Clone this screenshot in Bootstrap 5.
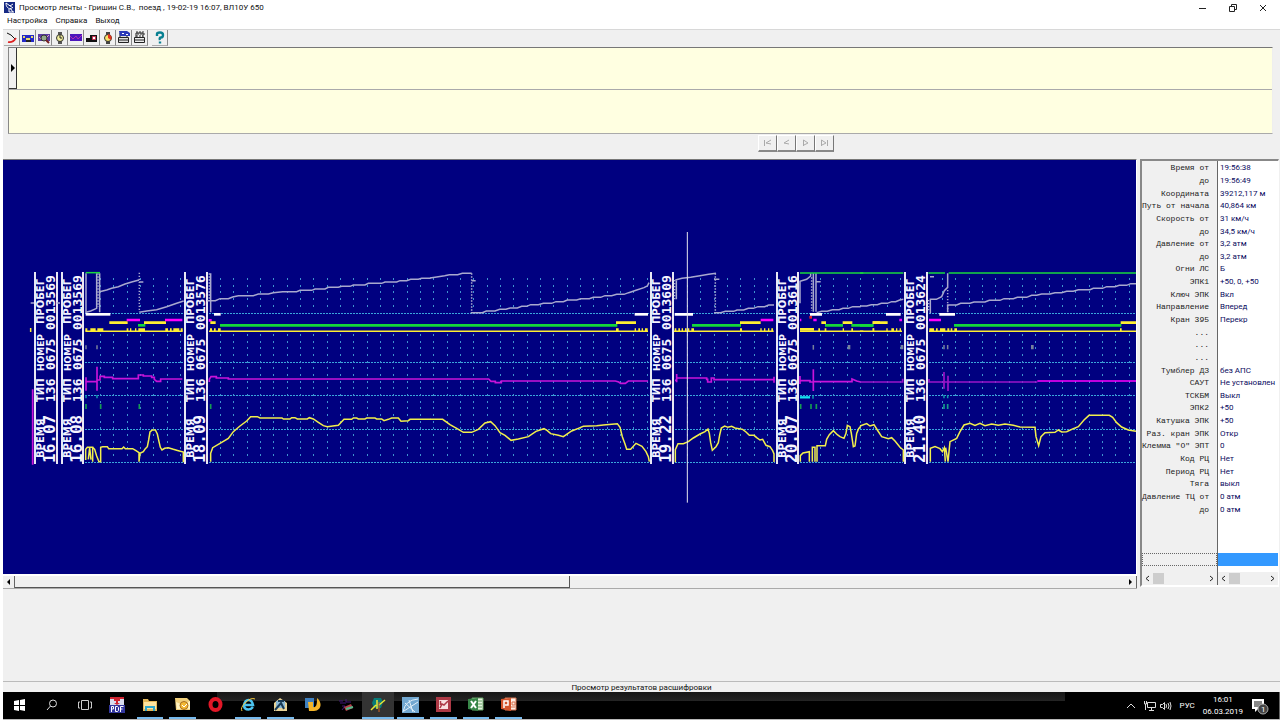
<!DOCTYPE html>
<html lang="ru">
<head>
<meta charset="utf-8">
<meta name="viewport" content="width=device-width, initial-scale=1">
<title>Просмотр ленты</title>
<link href="https://cdn.jsdelivr.net/npm/bootstrap@5.3.0/dist/css/bootstrap.min.css" rel="stylesheet">
<script src="https://cdn.jsdelivr.net/npm/bootstrap@5.3.0/dist/js/bootstrap.bundle.min.js" defer></script>
<style>
body{font:8px/12px Roboto,"Noto Sans",sans-serif;color:#111;background:#fff;padding-left:3px;overflow-x:hidden}
button{font:inherit;color:inherit;padding:0;border:0;background:none}
svg{display:block}
.titlebar{height:15px;white-space:pre;padding:0 2px 0 1px}
.titlebar .win{width:30px;height:14px;display:flex;align-items:center;justify-content:center}
.menubar{height:14px}
.menubar a{color:#111;text-decoration:none}
.face{background:#f0f0f0}
.tools{height:18px;border-top:1px solid #d8d8d8;padding-left:1px}
.tool{width:16px;height:16px;border-right:1px solid #8a8a8a;border-bottom:1px solid #aaa;display:flex;align-items:center;justify-content:center}
.records{margin:0 7px 0 5px;height:87px;background:#ffffe1;border:1px solid #888;border-color:#777 #eee #aaa #888}
.records .rec{height:42px;border-bottom:1px solid #aaa}
.records .mark-cell{width:8px;background:#f0f0f0;border-right:1px solid #333;border-bottom:1px solid #333;display:flex;align-items:center;justify-content:center}
.navrow{height:25px;padding-top:1px}
.navbtns{margin-left:755px}
.navbtns button{width:19px;height:17px;border:1px solid #fff;border-right-color:#777;border-bottom:2px solid #888;display:flex;align-items:center;justify-content:center}
.tape{background:#000080;height:415px;border-top:1px solid #777;border-right:1px solid #fff;overflow:hidden}
.tape svg{width:1133px;height:415px}
.tape text{fill:#f4f4ff}
.cap{font:bold 10px "DejaVu Sans",sans-serif}
.capn{font:bold 9px "DejaVu Sans",sans-serif}
.num{font:bold 13px "DejaVu Sans Mono",monospace}
.clock{font:bold 16px "DejaVu Sans Mono",monospace}
.hscroll{height:15px;background:#f0f0f0;border-top:2px solid #fff;border-bottom:1px solid #aaa}
.hscroll button{width:12px;border-right:1px solid #666;display:flex;align-items:center;justify-content:center;background:#f0f0f0}
.hscroll .thumb{width:50%;background:#f0f0f0;border-right:1px solid #555;border-bottom:1px solid #555}
.side{width:139px;height:428px;margin:0 1px 0 3px;border:2px solid #888;border-color:#888 #fff #fff #888;border-right-width:1px;padding-top:1px;background:linear-gradient(90deg,#f0f0f0 75px,#666 75px,#666 76px,#fff 76px)}
.side table{height:354px;width:100%;table-layout:fixed}
.side th,.side td{padding:0;height:12px;line-height:12px;white-space:nowrap;vertical-align:middle}
.side th{width:76px;text-align:right;padding-right:9px;font:8px/12px "Liberation Mono",monospace;color:#222}
.side td{font:8px/12px Roboto,sans-serif;color:#0a0a60;padding-left:2px}
.side .pick{height:13px}
.side .pick div:first-child{width:75px;border:1px dotted #666}
.side .pick div:last-child{background:#3399ff;margin-left:1px}
.sidebars{margin-top:6px}
.sb{height:13px;background:#f0f0f0;display:flex;align-items:center}
.sb:first-child{width:75px;margin-right:1px}
.sb button{width:11px;height:13px;display:flex;align-items:center;justify-content:center}
.sb i{width:11px;height:11px;background:#cdcdcd}
.status{height:11px;line-height:11px;border-top:1px solid #bbb;background:#f1f1f1;text-align:center}
.taskbar{height:27px;background:#000;color:#fff;border-right:1px solid #666}
.stale{position:absolute;left:214px;width:848px;height:9px;top:0;background:linear-gradient(#171717,#242424)}
.apps{width:522px;z-index:1}
.apps button{flex:1 1 0;display:flex;align-items:center;justify-content:center;border-bottom:2px solid transparent;margin:0 3px}
.apps .open{border-bottom-color:#76b9ed}
.apps .now{background:#333;margin:0;flex:0 0 32px}
.tray{padding-right:10px}
.edge{height:1px;background:#b9b9b9}
</style>
</head>
<body class="d-flex flex-column min-vh-100">
<header>
  <div class="titlebar d-flex align-items-center"><svg class="me-1 flex-shrink-0" width="11" height="11" viewBox="0 0 11 11"><path fill="#172a84" d="M0 0h11v11H0z"/><path d="M2 1l7 5M2 1c0 4 2 6 6 6M6 4l3-2M6 6l3 4M5 7v3h5" stroke="#fff" fill="none"/></svg><span class="flex-fill">Просмотр ленты - Гришин С.В.,  поезд , 19-02-19 16:07, ВЛ10У 650</span><button class="win" aria-label="Свернуть"><svg width="8" height="8"><path d="M0 4.5h7" stroke="#222"/></svg></button><button class="win" aria-label="Восстановить"><svg width="8" height="8" fill="none" stroke="#222"><path d="M.5 2.500h5v5h-5zM2.500 2V.5h5v5H6"/></svg></button><button class="win" aria-label="Закрыть"><svg width="8" height="8"><path d="M1 1l6 6M7 1L1 7" stroke="#222"/></svg></button></div>
  <nav class="menubar d-flex gap-2 ps-1"><a href="#">Настройка</a><a href="#">Справка</a><a href="#">Выход</a></nav>
</header>
<main class="face flex-fill d-flex flex-column">
  <div class="tools d-flex" role="toolbar">
    <button class="tool" aria-label="Кривая"><svg width="12" height="12"><path d="M1 1l4 2 4 4" stroke="#111" fill="none"/><path d="M2 10q5 1 8-4" stroke="#d22" stroke-width="1.600" fill="none"/></svg></button>
    <button class="tool" aria-label="Лента"><svg width="12" height="12"><path fill="#2428c8" d="M0 3h12v7H0z"/><path fill="#e4d86a" d="M1 4h2v2H1zM9 4h2v2H9zM4 6h4v2H4z"/><path fill="#222" d="M4 8h5v2H4z"/></svg></button>
    <button class="tool" aria-label="Обзор"><svg width="12" height="12"><path fill="#5b39a5" d="M0 2h12v7H0z"/><path d="M1 5l2 2M9 5l2-2" stroke="#e0a0c0"/><circle cx="6" cy="6" r="3" fill="#94a98c" stroke="#333"/><path d="M8 8l3 3" stroke="#722" stroke-width="2"/></svg></button>
    <button class="tool" aria-label="Время"><svg width="12" height="12"><path fill="#555" d="M4 0h4v12H4z"/><circle cx="6" cy="6" r="3.500" fill="#f2ee9a" stroke="#333"/><path d="M6 3v3h2" stroke="#222" fill="none"/></svg></button>
    <button class="tool" aria-label="График"><svg width="12" height="12"><path fill="#4b16bc" d="M0 2h12v7H0z"/><path d="M0 4l3 3 3-3 2 3 4-4" stroke="#b030b0" fill="none"/></svg></button>
    <button class="tool" aria-label="Локомотив"><svg width="12" height="12"><path fill="#111" d="M0 6h4V3h7v7H0z"/><path fill="#fff" stroke="#c35" d="M6.500 4.500h3v3h-3z"/></svg></button>
    <button class="tool" aria-label="Таймер"><svg width="12" height="12"><path fill="#444" d="M4 0h4v12H4z"/><circle cx="6" cy="6" r="3.500" fill="#f8e36a" stroke="#333"/><path fill="#e3321c" d="M6 6V2a4 4 0 0 1 3 6z"/></svg></button>
    <button class="tool" aria-label="Печать ленты"><svg width="14" height="13"><path d="M1.500 6.500h10v5h-10zM3 6V2h7v4M1 9h11" fill="#ddd" stroke="#222"/><path fill="#2938b8" d="M2 0h8l3 2v3H3z"/><path fill="#fff" d="M5 2h2v1H5zM9 3h2v1H9z"/></svg></button>
    <button class="tool" aria-label="Печать"><svg width="14" height="13"><path d="M1.500 6.500h10v5h-10zM3 6V2h7v4M1 9h11" fill="#eee" stroke="#222"/><path d="M3 1h8M4 3h8M3 5h7" stroke="#333" stroke-dasharray="2 1"/></svg></button>
    <button class="tool ms-1" aria-label="Справка"><svg width="12" height="13"><path d="M3 5V3q0-1.500 3-1.500T9 4 7 6.500 6 9M6 10.500v2" stroke="#088092" stroke-width="2.400" fill="none"/></svg></button>
  </div>
  <section class="records"><div class="rec d-flex"><div class="mark-cell"><svg width="5" height="8"><path d="M1 0l4 4-4 4z"/></svg></div></div></section>
  <div class="navrow"><div class="navbtns d-flex">
    <button aria-label="В начало"><svg width="9" height="8" fill="none" stroke="#aaa"><path d="M1.500 1v6M8 1L3 4l5 1"/></svg></button>
    <button aria-label="Назад"><svg width="9" height="8" fill="none" stroke="#aaa"><path d="M7 1L2 4l5 1"/></svg></button>
    <button aria-label="Вперед"><svg width="9" height="8" fill="none" stroke="#aaa"><path d="M2.500 7V1L7 4 3 6"/></svg></button>
    <button aria-label="В конец"><svg width="9" height="8" fill="none" stroke="#aaa"><path d="M1.500 7V1L6 4 2 6M7.500 1v6"/></svg></button>
  </div></div>
  <div class="d-flex">
    <section class="flex-fill overflow-hidden">
      <div class="tape">
        <svg viewBox="3 160 1133 415" fill="none">
          <g id="grid" shape-rendering="crispEdges"></g>
          <g id="heads"></g>
          <g transform="translate(0 260) scale(.33333)" stroke-width="4.500">
            <path stroke="#a9a9ce" d="M92 129h10M170 129h10M258 40v117l14-4 18-8V40M299 40v117M299 95l21-5 15-5 20-5 20-8 20-6 22-6M418 66h12M418 157l22-4 30-4 30-9 30-10 21-7"/>
            <path stroke="#a9a9ce" stroke-dasharray="4 5" d="M418 38v118M294 40v100"/>
            <path stroke="#19d83c" d="M257 38h43"/><path stroke="#fff" stroke-width="8" d="M257 163h74"/>
            <path stroke="#ffee32" stroke-width="8" d="M328 188h55M432 188h66M256 209h6M271 209h16M292 209h18M380 209h5M390 209h4M405 209h4M415 209h20M496 209h8M510 209h5M520 209h18M542 209h6"/>
            <path stroke="#ffee32" d="M92 204v12M256 214h292"/><path stroke="#f0f" stroke-width="8" d="M380 180h40M495 180h52"/>
            <path stroke="#14d83a" stroke-width="8" d="M414 196h22"/>
            <path stroke="#77819c" d="M258 256v12M291 256v12"/>
            <path stroke="#1299ae" d="M258 405v10M291 405v10"/><path stroke="#159b53" stroke-width="5" d="M258 432v15M302 432v15M418 432v15"/>
            <path stroke="#c914d9" stroke-width="5" d="M98 388v226M258 352v40M258 365h33M291 320v72M291 360h9v-11h13v3h25v4h77v-11h15v3h25v4h8v6l7 6h12v-7h65"/>
            <path stroke="#f2ef4c" d="M257 600V568L262 562H278V605M265 598L269 563 273 599M278 562L284 568 290 588 297 605H302V562L308 560H322L326 566H366L371 561 376 566H398L408 572 417 578V605L420 580 430 575 436 566 442 560 446 540 450 516 457 510H466L472 522 477 545 481 562 486 570 494 565 505 563 520 568 535 572 550 576V607"/>
          </g>
          <g transform="translate(200 260) scale(.33333)" stroke-width="4.500">
            <path stroke="#a9a9ce" d="M22 122H46L60 116H85L98 111 115 107H160L175 102H205L220 98 248 95H290L300 91H335L345 87H375L385 82H415L425 79H450L460 75H495L505 70H545L555 66H590L600 62H620L632 58H655L665 55H692M32 40v117"/>
            <path stroke="#a9a9ce" stroke-dasharray="4 5" d="M28 40v80"/>
            <path stroke="#fff" stroke-width="8" d="M42 163h20"/><path stroke="#f0f" stroke-width="8" d="M26 181h9"/>
            <path stroke="#ffee32" stroke-width="8" d="M31 188h16M30 209h6M42 209h5M54 209h8"/><path stroke="#ffee32" d="M27 214h663"/>
            <path stroke="#14d83a" stroke-width="8" d="M60 196h630"/>
            <path stroke="#c914d9" stroke-width="5" d="M28 366v-8l5-8h16v4h36v3h605"/><path stroke="#159b53" stroke-width="5" d="M32 432v15"/>
            <path stroke="#f2ef4c" d="M32 605V580L38 563 60 550 85 535 100 515 120 498 140 483 152 470H172L180 474H246L250 477H270L275 473H285L292 477H322L328 473 340 477 355 487 370 497 382 500 415 496 432 478H455L460 474H470L475 477H495L500 474H525L530 477H545L552 482 565 478 575 474H595L603 484 625 482 630 478H691"/>
          </g>
          <g transform="translate(430 260) scale(.33333)" stroke-width="4.500">
            <path stroke="#a9a9ce" d="M0 54L20 51 44 47 58 44H83L97 40H125M125 62h12M122 158H157L169 153H195L209 148H228L240 144H262L275 139H290L302 134H325L340 130H365L378 125H400L412 120H440L452 116H478L490 112H512L525 107H545L560 103H582L596 98 618 91 642 83 652 78 657 68"/>
            <path stroke="#a9a9ce" stroke-dasharray="4 5" d="M125 40v116"/>
            <path stroke="#fff" stroke-width="8" d="M614 163h40"/>
            <path stroke="#14d83a" stroke-width="8" d="M0 196h562"/><path stroke="#ffee32" stroke-width="8" d="M558 188h60M558 209h8M614 209h4M625 209h5M635 209h4M645 209h8"/><path stroke="#ffee32" d="M0 214h654"/>
            <path stroke="#c914d9" stroke-width="5" d="M0 357H176L183 364H196V368H214V363H556L566 366 572 370H586L595 363H654"/>
            <path stroke="#f2ef4c" d="M0 478H38L60 494 80 505 100 517H125L145 508 165 489 182 485 195 497 210 518 225 526 243 541 265 537 295 530 318 514 342 506 352 512 362 521 385 526 400 530 412 522 425 513 445 505 460 499 500 497 520 495 562 491 570 502 577 530 585 552 590 568H602L618 550 636 559 648 575 655 590 658 605"/>
          </g>
          <g transform="translate(640 260) scale(.33333)" stroke-width="4.500">
            <path stroke="#a9a9ce" d="M106 60L126 55 152 52 180 47 206 43 228 40M222 58h16M109 60v58M222 158H242L256 154H281L291 150H311L325 145H340L354 140H374L386 135H402M480 130V64l20-6 12-10v-8M520 40v115M528 40v115M530 65h12M530 158L545 154H562L577 149H597L609 145H625L638 140H662"/>
            <path stroke="#a9a9ce" stroke-dasharray="4 5" d="M226 40v116M104 60v60M515 52v100"/>
            <path stroke="#19d83c" d="M480 39h190"/><path stroke="#fff" stroke-width="8" d="M104 163h55M510 163h36"/>
            <path stroke="#14d83a" stroke-width="8" d="M156 196h147M555 196h54M634 196h67"/>
            <path stroke="#ffee32" stroke-width="8" d="M300 188h62M544 188h14M608 188h29M698 188h22M104 209h5M115 209h5M125 209h4M135 209h5M144 209h4M154 209h8M300 209h6M361 209h4M372 209h4M384 209h4M394 209h5M480 208h42M535 209h5M554 209h5M608 209h4M634 209h5M698 209h5"/>
            <path stroke="#ffee32" d="M102 214h299M480 214h190"/>
            <path stroke="#f0f" stroke-width="8" d="M362 180h38M480 180h4M520 180h10"/><path stroke="#e52232" stroke-width="8" d="M508 172h8"/>
            <path stroke="#c914d9" stroke-width="5" d="M105 361h5M110 342v25M110 354H200V358H203V366H214V354H222V359H402M402 350v18M480 348v24M480 362H510V366H520M520 328v65M520 365H636V357L650 363 662 366"/>
            <path stroke="#12e4ef" stroke-width="7" d="M480 412h30"/><path stroke="#1299ae" d="M519 406v10"/><path stroke="#77819c" d="M520 255v14"/><path stroke="#77819c" stroke-width="8" d="M627 255v13"/>
            <path stroke="#159b53" stroke-width="5" d="M482 432v15M513 432v15M529 432v15"/>
            <path stroke="#f2ef4c" d="M106 607V569L114 551H130L145 545 160 534 180 522 195 515 204 507 208 520 212 548 217 571 228 560 235 548 239 525 244 504 254 498 264 502 275 499 285 504 308 508 318 516 328 526H342L350 533 360 540 368 538 378 556 390 560 398 572 402 582V606M481 605V587L489 579 508 575V605M517 605V562H525V605M531 605V557H556L560 538 568 524 580 512 592 524 600 530 612 535 618 520 622 496 630 500 634 520 640 560 645 558 650 520 656 506 662 499"/>
            <path stroke="#e7e7ef" stroke-width="3" d="M142-84v812"/>
          </g>
          <g transform="translate(860 260) scale(.33333)" stroke-width="4.500">
            <path stroke="#a9a9ce" d="M0 138H20L34 134H52L64 130H82L95 125H107L119 120 130 118M211 160V118H229L245 110 253 92 263 82V40M210 50h12M263 157V135H290L302 130H330L342 126H375L388 121H420L432 116H460L472 112H500L515 106H530L545 102H570L585 98H605L620 94H640L655 89H690L700 85H728L740 80H765L778 76H800L812 71H828"/>
            <path stroke="#a9a9ce" stroke-dasharray="4 5" d="M263 90v65M206 120v35"/><path stroke="#19d83c" d="M0 39h130M205 39h50M266 39h562"/>
            <path stroke="#fff" stroke-width="8" d="M78 163h44M238 163h47"/><path stroke="#14d83a" stroke-width="8" d="M0 196h39M282 196h502"/>
            <path stroke="#ffee32" stroke-width="8" d="M38 188h45M782 188h46M38 209h4M79 209h4M94 209h8M108 209h4M119 209h4M208 209h14M228 209h5M240 209h16M262 209h6M272 209h5M283 209h8M780 209h5"/><path stroke="#ffee32" d="M0 214h126M207 214h621"/>
            <path stroke="#f0f" stroke-width="8" d="M118 180h8M207 180h36"/>
            <path stroke="#77819c" stroke-width="8" d="M126 255v13M517 255v13"/><path stroke="#77819c" d="M252 255v13M263 255v13"/>
            <path stroke="#9b14c8" stroke-width="5" d="M0 366h128v-10M207 357v9h325M252 336v50M264 347v46"/><path stroke="#f0f" stroke-width="5" d="M532 363h296"/>
            <path stroke="#1299ae" d="M252 405v10M263 405v10"/><path stroke="#159b8b" stroke-width="5" d="M252 432v15M263 432v15"/>
            <path stroke="#f2ef4c" d="M0 498L20 491 30 498 42 494 52 510 65 530 85 536 95 533 105 543 120 562 130 570V605M211 605V565L225 560 240 566 247 575 253 563 256 605M257 575V563L264 605 270 545 290 535 300 515 312 495 330 490 345 496 360 490 375 497 395 492 415 496 435 492 460 496 480 501 525 502 528 530 536 557 543 530 555 518 585 517 595 510 605 516 620 515 640 506 655 500 672 480 687 466H748L758 472 770 488 785 501 805 510 828 514"/>
          </g>
        </svg>
      </div>
      <div class="hscroll d-flex"><button aria-label="Влево"><svg width="5" height="6"><path d="M4 0v6L1 3z"/></svg></button><div class="flex-fill"><div class="thumb h-100"></div></div><button aria-label="Вправо"><svg width="5" height="6"><path d="M1 0v6l3-3z"/></svg></button></div>
    </section>
    <aside class="side flex-shrink-0 d-flex flex-column">
      <table><tbody id="params"></tbody></table>
      <div class="flex-fill"></div>
      <div class="pick d-flex"><div></div><div class="flex-fill"></div></div>
      <div class="sidebars d-flex">
        <div class="sb"><button aria-label="Влево"><svg width="5" height="7"><path d="M4 1L1 3.500 4 6" stroke="#222" fill="none"/></svg></button><i></i><span class="flex-fill"></span><button aria-label="Вправо"><svg width="5" height="7"><path d="M1 1l3 2.500L1 6" stroke="#222" fill="none"/></svg></button></div>
        <div class="sb flex-fill"><button aria-label="Влево"><svg width="5" height="7"><path d="M4 1L1 3.500 4 6" stroke="#222" fill="none"/></svg></button><i></i><span class="flex-fill"></span><button aria-label="Вправо"><svg width="5" height="7"><path d="M1 1l3 2.500L1 6" stroke="#222" fill="none"/></svg></button></div>
      </div>
    </aside>
  </div>
  <div class="flex-fill"></div>
  <div class="status">Просмотр результатов расшифровки</div>
</main>
<footer class="taskbar d-flex position-relative">
  <div class="stale"></div>
  <div class="apps d-flex">
    <button aria-label="Пуск"><svg width="11" height="12" fill="#fff"><path d="M0 2l5-1v5H0zM6 1l5-1v6H6zM0 7h5v5l-5-1zM6 7h5v5l-5-1z"/></svg></button>
    <button aria-label="Поиск"><svg width="12" height="12" fill="none" stroke="#ddd"><circle cx="7" cy="4.500" r="3.500"/><path d="M4.500 7L1 11"/></svg></button>
    <button aria-label="Представление задач"><svg width="14" height="10" fill="none" stroke="#ccc"><path d="M3.500.5h7v9h-7zM2 2H.5v6H2M12 2h1.500v6H12"/></svg></button>
    <button aria-label="PDF"><svg width="16" height="16"><path fill="#d8dced" d="M1 0h14v15H1z"/><path fill="#ce2430" d="M1 0h14v2h-4v2H9v2h2L8 8 5 6h2V4H5V2H1z"/><path fill="#33379e" d="M0 8h16v8H0z"/><path d="M2.500 15V9.500H4.500v2.500H3M6.500 9.500v5h2l1-1v-3l-1-1zM11.500 15V9.500h3m-3 2.500h2" stroke="#fff" fill="none"/></svg></button>
    <button class="open" aria-label="Проводник"><svg width="14" height="14"><path fill="#e3b75a" d="M0 1h5l1 2h8v10H0z"/><path fill="#ffe4a0" d="M1 4h12v7H1z"/><path fill="#2fa7cc" d="M2 13V8h10v5h-2v-3H4v3z"/></svg></button>
    <button class="open" aria-label="Outlook"><svg width="16" height="15"><path fill="#f0cf7b" d="M0 1h12l3 3v9H1z"/><path fill="#fff2c0" d="M1 5l7 3 7-4v8H2z"/><circle cx="9" cy="8.500" r="4" fill="#f3b933" stroke="#aa6e1f"/><path d="M7 8l2 2 3-3" stroke="#fff" fill="none"/></svg></button>
    <button aria-label="Opera"><svg width="15" height="15"><ellipse cx="7.500" cy="7.500" rx="5" ry="5.500" fill="none" stroke="#e21727" stroke-width="4"/></svg></button>
    <button class="open" aria-label="Internet Explorer"><svg width="16" height="15"><path d="M4 8h9Q12 3 8.500 3T4 8q0 4.500 4.500 4.500Q11 12.500 13 10" stroke="#4cc3ef" stroke-width="2.500" fill="none"/><path d="M2 14Q0 11 5 6q6-6 10-4" stroke="#f8ca3b" fill="none"/></svg></button>
    <button class="open" aria-label="Архив"><svg width="15" height="15"><path fill="#e9d397" d="M1 6l6-5 7 5v8H1z"/><path fill="#8cbad6" d="M3 4h9v7H3z"/><path d="M2 13L8 6l3 6M5 4h6" stroke="#183a55" stroke-width="2" fill="none"/></svg></button>
    <button aria-label="Перенос"><svg width="16" height="15"><path fill="#3f80bf" d="M0 1h9v10H0z"/><path fill="#f5b528" d="M3 5h5v5c4 1 4-4 4-9 6 5 4 13-3 13H4z"/></svg></button>
    <button aria-label="СПО"><svg width="16" height="14"><path d="M1 3h4M2 5h6M4 8h3l-3 4M8 1v3h5" stroke="#45167a" fill="none"/><path fill="#b5424a" d="M6 9l7-3 2 4-7 3z"/><path d="M8 11l7-2" stroke="#55b98c" stroke-width="2"/></svg></button>
    <button class="open now" aria-label="Просмотр ленты"><svg width="16" height="16"><path fill="#087b78" d="M4 1h7l2 4-2 6H4L2 6z"/><path d="M7 3v9M1 13l5-5M9 8l6-5" stroke="#e9e634" stroke-width="1.500"/><path d="M9 5v10" stroke="#d36426"/></svg></button>
    <button class="open" aria-label="Схема"><svg width="17" height="16"><path fill="#72a8d1" d="M0 0h17v16H0z"/><path d="M1 15Q3 3 16 2M3 6l10 9M7 3l4 12M2 14L16 5" stroke="#e2f0fa" fill="none"/></svg></button>
    <button class="open" aria-label="Access"><svg width="15" height="15"><path fill="#ad3945" d="M0 0h15v15H0z"/><path fill="#f7dfdf" d="M3 3h9v9H3z"/><path d="M4 11l2-4 2 1 4-4M4.500 4v4" stroke="#ad3945" stroke-width="1.500" fill="none"/></svg></button>
    <button class="open" aria-label="Excel"><svg width="16" height="15"><path fill="#e6f2df" stroke="#65a264" d="M4 1h11v12H4z"/><path d="M10 4h4M10 7h4M10 10h4" stroke="#65a264"/><path fill="#388648" d="M0 2l10-1v13L0 12z"/><path d="M3 4l5 7M8 4l-5 7" stroke="#fff" stroke-width="2"/></svg></button>
    <button class="open" aria-label="PowerPoint"><svg width="16" height="15"><path fill="#fff0e7" stroke="#d5714c" d="M4 1h11v12H4z"/><path d="M9 10h5M11 5h3v3h-3z" stroke="#d5714c" fill="none"/><path fill="#d3542c" d="M0 2l10-1v13L0 12z"/><path d="M3 11V4h4v4H4" stroke="#fff" stroke-width="1.500" fill="none"/></svg></button>
  </div>
  <div class="tray d-flex align-items-center ms-auto gap-2">
    <div class="d-flex align-items-center gap-1">
    <svg width="10" height="8" fill="none" stroke="#ddd"><path d="M1 6l4-4 4 4"/></svg>
    <svg class="ms-1" width="12" height="11" fill="none" stroke="#ddd"><path d="M3.500 2.500h8v5h-8zM7.500 8v2M5 10.500h5M.5 1v3h2V1M1.500 4v6"/></svg>
    <svg width="12" height="10" fill="none" stroke="#ddd"><path d="M.5 3.500h2l2-2v7l-2-2h-2zM6 3q1 2 0 4M8 2q2 3 0 6M10 1q2 4 0 8"/></svg>
    </div>
    <span>РУС</span>
    <div class="text-center">16:01<br>06.03.2019</div>
    <button aria-label="Уведомления"><svg width="18" height="18"><path fill="#fff" d="M1 2h12v10H7l-3 3v-3H1z"/><path d="M3 5h8M3 7h8M3 9h5" stroke="#111"/><circle cx="12" cy="12" r="5" fill="#444" stroke="#aaa"/><text x="10" y="15" font-size="8" fill="#fff">1</text></svg></button>
  </div>
</footer>
<div class="edge"></div>
<script>
const rows=[["Время от","19:56:38"],["до","19:56:49"],["Координата","39212,117 м"],["Путь от начала","40,864 км"],["Скорость от","31 км/ч"],["до","34,5 км/ч"],["Давление от","3,2 атм"],["до","3,2 атм"],["Огни ЛС","Б"],["ЭПК1","+50, 0, +50"],["Ключ ЭПК","Вкл"],["Направление","Вперед"],["Кран 395","Перекр"],["...",""],["...",""],["...",""],["Тумблер ДЗ","без АПС"],["САУТ","Не установлен"],["ТСКБМ","Выкл"],["ЭПК2","+50"],["Катушка ЭПК","+50"],["Раз. кран ЭПК","Откр"],["Клемма \"О\" ЭПТ","0"],["Код РЦ","Нет"],["Период РЦ","Нет"],["Тяга","выкл"],["Давление ТЦ от","0 атм"],["до","0 атм"]];
document.getElementById("params").innerHTML=rows.map(r=>`<tr><th scope="row">${r[0]}</th><td>${r[1]}</td></tr>`).join("");

// dotted grid of every tape section: [left, right, first dotted column]
const step=40/3, sections=[[85,183,100],[209,649,220],[675,775,687],[800,903,820],[929,1136,942]];
let dots="", lines="";
for(const [l,r,c] of sections){
  for(const y of [313,362,395,429,462]) lines+=`M${l} ${y}H${r}`;
  for(let x=c;x<r;x+=step){
    for(let i=0;i<5;i++) dots+=`M${Math.round(x)} ${Math.round(279+i*step/2)}h1`;
    for(let i=0;i<19;i++) dots+=`M${Math.round(x)} ${Math.round(335+i*step/2)}h1`;
  }
}
document.getElementById("grid").innerHTML=`<path d="${lines}" stroke="#3aa6dc" stroke-dasharray="2 1" transform="translate(0 .5)"/><path d="${dots}" stroke="#3f93cf" stroke-width="2"/>`;

// section headers printed along the tape: [left line, right line, mileage, time]
const heads=[[35,57,"0013569","16.07"],[62,83,"0013569","16.08"],[185,207,"0013576","18.09"],[651,673,"0013609","19.22"],[777,798,"0013616","20.07"],[905,927,"0013624","21.40"]];
const put=(c,x,y,t)=>`<text class="${c}" transform="translate(${x} ${y}) rotate(-90)">${t}</text>`;
document.getElementById("heads").innerHTML=heads.map(([a,b,m,t])=>
  `<path d="M${a} 272v192M${b} 272v192" stroke="#e8e8f4" stroke-width="2"/>`+
  put("cap",a+9,324,"ПРОБЕГ")+put("capn",a+9,371,"НОМЕР")+put("cap",a+9,402,"ТИП")+put("cap",a+9,458,"ВРЕМЯ")+
  put("num",a+20,330,m)+put("num",a+20,370,"0675")+put("num",a+20,402,"136")+put("clock",a+20,463,t)).join("");
</script>
</body>
</html>
